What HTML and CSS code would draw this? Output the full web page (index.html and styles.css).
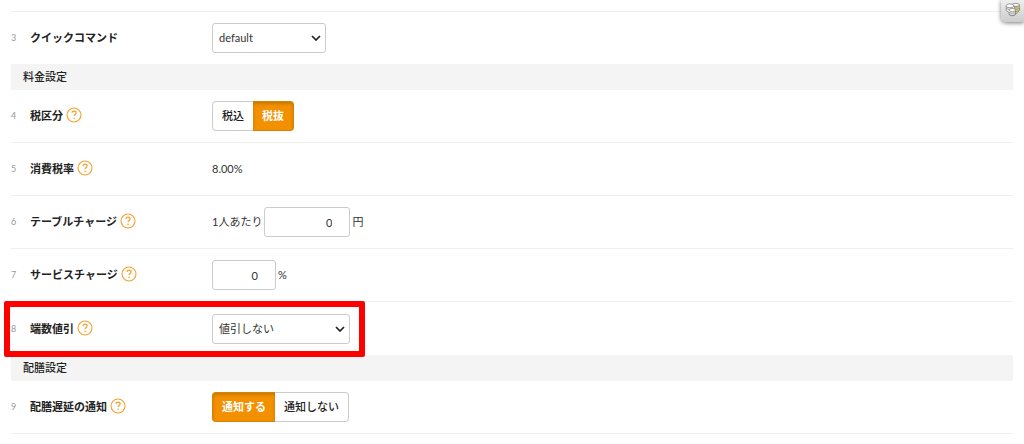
FILE: index.html
```html
<!DOCTYPE html>
<html lang="ja">
<head>
<meta charset="utf-8">
<meta name="viewport" content="width=device-width, initial-scale=1">
<title>料金設定</title>
<link rel="stylesheet" href="styles.css">
</head>
<body>
<svg class="defs" width="0" height="0" aria-hidden="true">
  <symbol id="help" viewBox="0 0 16 16"><circle cx="8" cy="8" r="7" fill="none" stroke="#f5a02a" stroke-width="1.1"/><path d="M5.900 5.900C6 4.700 6.900 4.100 8 4.100c1.200 0 2.100.7 2.100 1.800 0 1.500-2 1.600-2 3.200" fill="none" stroke="#f5a02a" stroke-width="1.200"/><circle cx="8.100" cy="11.200" r=".8" fill="#f5a02a"/></symbol>
  <symbol id="chevron" viewBox="0 0 10 6"><path d="M1 1l4 4 4-4" fill="none" stroke="#222" stroke-width="1.700"/></symbol>
</svg>
<button class="coins" type="button" aria-label="コイン">
  <svg viewBox="0 0 16 16" width="16" height="16" aria-hidden="true">
    <g stroke="#777" stroke-width=".7">
      <path d="M7.500 3v8c2 1.500 5 .5 5.500-1L14.500 8V3z" fill="#a8a05a"/>
      <ellipse cx="10.800" cy="3" rx="3.700" ry="1.600" fill="#f4f4ee"/>
      <path d="M9 5.600c2 .8 4 .5 5.500-.4M9 7.800c2 .8 3.500.5 5-.4M9 10c2 .8 3 .5 4-.4" fill="none" stroke="#eee9b8"/>
      <path d="M1.200 4v4.500L4 10.500v2c1.500 1.700 5 1.700 6.500 0V8L8.700 4z" fill="#f2f2ee"/>
      <ellipse cx="5" cy="3.800" rx="3.800" ry="1.900" fill="#fff"/>
      <path d="M1.200 6.200c1.500 1.300 4 1.500 6 .7" fill="none"/>
      <ellipse cx="7.300" cy="8" rx="3.300" ry="1.500" fill="#fff"/>
      <path d="M4 10.300c1.500 1.300 5 1.300 6.500 0M4 12.300c1.500 1.300 5 1.300 6.500 0" fill="none"/>
    </g>
  </svg>
</button>
<form class="settings">
  <div class="row row-last">
    <span class="num">3</span>
    <div class="name"><label for="quick">クイックコマンド</label></div>
    <div class="value"><span class="select select-short"><select id="quick"><option>default</option></select><svg class="chevron"><use href="#chevron"/></svg></span></div>
  </div>
  <h2 class="section">料金設定</h2>
  <div class="row">
    <span class="num">4</span>
    <div class="name"><span id="tax">税区分</span><button class="help" type="button" aria-label="ヘルプ"><svg><use href="#help"/></svg></button></div>
    <div class="value"><div class="toggle" role="group" aria-labelledby="tax"><button type="button" aria-pressed="false">税込</button><button type="button" aria-pressed="true">税抜</button></div></div>
  </div>
  <div class="row">
    <span class="num">5</span>
    <div class="name"><span>消費税率</span><button class="help" type="button" aria-label="ヘルプ"><svg><use href="#help"/></svg></button></div>
    <div class="value">8.00%</div>
  </div>
  <div class="row">
    <span class="num">6</span>
    <div class="name"><label for="table">テーブルチャージ</label><button class="help" type="button" aria-label="ヘルプ"><svg><use href="#help"/></svg></button></div>
    <div class="value"><span>1人あたり</span><input class="amount" id="table" type="text" value="0"><span>円</span></div>
  </div>
  <div class="row">
    <span class="num">7</span>
    <div class="name"><label for="service">サービスチャージ</label><button class="help" type="button" aria-label="ヘルプ"><svg><use href="#help"/></svg></button></div>
    <div class="value"><input class="rate" id="service" type="text" value="0"><span>%</span></div>
  </div>
  <div class="row row-last row-marked">
    <span class="num">8</span>
    <div class="name"><label for="rounding">端数値引</label><button class="help" type="button" aria-label="ヘルプ"><svg><use href="#help"/></svg></button></div>
    <div class="value"><span class="select select-long"><select id="rounding"><option>値引しない</option></select><svg class="chevron"><use href="#chevron"/></svg></span></div>
  </div>
  <h2 class="section">配膳設定</h2>
  <div class="row">
    <span class="num">9</span>
    <div class="name"><span id="delay">配膳遅延の通知</span><button class="help" type="button" aria-label="ヘルプ"><svg><use href="#help"/></svg></button></div>
    <div class="value"><div class="toggle" role="group" aria-labelledby="delay"><button type="button" aria-pressed="true">通知する</button><button type="button" aria-pressed="false">通知しない</button></div></div>
  </div>
</form>
</body>
</html>
```

FILE: styles.css
```css
*,
*::after {
  box-sizing: border-box;
}

body {
  margin: 0;
  background: #fff;
  color: #333;
  font: 11px/16px Lato, "Noto Sans CJK JP", sans-serif;
}

button,
input,
select {
  margin: 0;
  color: inherit;
  font: inherit;
}

.defs {
  position: absolute;
}

.settings {
  margin: 11px 11px 0;
  border-top: 1px solid #f0f0f0;
}

.row {
  display: grid;
  grid-template-columns: 19px 182px 1fr;
  align-items: center;
  min-height: 53px;
  border-bottom: 1px solid #f0f0f0;
}

.row-last {
  min-height: 52px;
  border-bottom: 0;
}

.row-marked {
  position: relative;
  min-height: 53px;
}

.num {
  color: #999;
  font-size: 9px;
}

.name {
  display: flex;
  align-items: center;
  gap: 3px;
  color: #222;
  font-weight: 700;
}

.help {
  display: flex;
  padding: 0 0 2px;
  border: 0;
  background: none;
}

.help svg {
  width: 16px;
  height: 16px;
}

.value {
  display: flex;
  align-items: center;
  gap: 2px;
}

.section {
  margin: 0;
  padding: 5px 12px;
  background: #f4f4f4;
  color: #222;
  font-size: 11px;
  font-weight: 500;
  line-height: 16px;
}

.select {
  display: grid;
  align-items: center;
}

.select-short {
  width: 114px;
}

.select-long {
  width: 138px;
}

.select select,
.chevron {
  grid-area: 1 / 1;
}

select,
input {
  height: 30px;
  border: 1px solid #ccc;
  border-radius: 3px;
  background: #fff;
}

select {
  width: 100%;
  padding: 0 24px 0 6px;
  appearance: none;
}

.chevron {
  justify-self: end;
  width: 10px;
  height: 6px;
  margin-right: 5px;
  pointer-events: none;
}

input {
  padding: 0 17px;
  text-align: right;
}

.amount {
  width: 86px;
}

.rate {
  width: 64px;
}

.toggle {
  display: flex;
}

.toggle button {
  height: 30px;
  padding: 0 9px;
  border: 1px solid #ccc;
  background: #fff;
  color: #222;
  font-weight: 500;
}

.toggle button:first-child {
  border-right: 0;
  border-radius: 4px 0 0 4px;
}

.toggle button:last-child {
  border-left: 0;
  border-radius: 0 4px 4px 0;
}

.toggle button[aria-pressed="true"] {
  border-color: #d98200;
  background: #f39000;
  box-shadow: inset 0 2px 3px #c97800;
  color: #fff;
  font-weight: 700;
}

.row-marked::after {
  content: "";
  position: absolute;
  top: -1px;
  left: -7px;
  width: 361px;
  height: 56px;
  border: 6px solid #f00;
  border-radius: 2px;
  pointer-events: none;
}

.coins {
  position: absolute;
  top: 0;
  right: 0;
  display: flex;
  padding: 2px 3px 4px 4px;
  border: 0;
  border-radius: 0 0 0 5px;
  background: linear-gradient(#eee, #ccc);
  box-shadow: 0 1px 4px #777;
}
```
